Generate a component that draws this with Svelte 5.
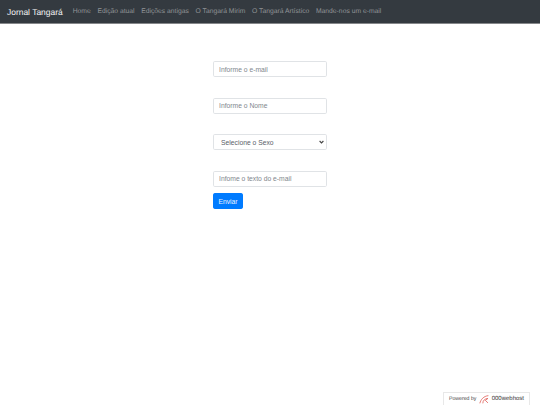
<script>
	const links = ['Home', 'Edição atual', 'Edições antigas', 'O Tangará Mirim', 'O Tangará Artístico', 'Mande-nos um e-mail'];
</script>

<nav class="navbar">
	<a class="brand" href="#top">Jornal Tangará</a>
	<ul class="links">
		{#each links as link}
			<li><a href="#top">{link}</a></li>
		{/each}
	</ul>
</nav>

<main>
	<form class="mail-form" onsubmit={e => e.preventDefault()}>
		<input type="email" placeholder="Informe o e-mail" />
		<input type="text" placeholder="Informe o Nome" />
		<select>
			<option>Selecione o Sexo</option>
		</select>
		<input class="last" type="text" placeholder="Infome o texto do e-mail" />
		<button type="submit">Enviar</button>
	</form>
</main>

<a class="badge" href="#top">
	<span>Powered by</span>
	<svg width="12" height="11" viewBox="0 0 12 11" aria-hidden="true">
		<path d="M1 10 C2 5.5 5.5 1.5 11 1" fill="none" stroke="#e0655f" stroke-width="1" />
		<path d="M4.5 10 C4.5 6.5 7 4.5 10.5 4.2 L7.5 6.6 L10.5 9.5" fill="none" stroke="#e0655f" stroke-width="1" />
	</svg>
	<b>000webhost</b>
</a>

<style>
	:global(body) {
		margin: 0;
		background: #fff;
		font-family: "Liberation Sans", Arial, sans-serif;
		text-rendering: geometricPrecision;
	}

	.navbar {
		display: flex;
		align-items: center;
		box-sizing: border-box;
		height: 24px;
		padding: 0 7px;
		background: #343a40;
		border-bottom: 1px solid #85878a;
	}

	.brand {
		margin-right: 10px;
		font-size: 8.45px;
		color: #f2f2f3;
		text-decoration: none;
		white-space: nowrap;
	}

	.links {
		display: flex;
		gap: 6.7px;
		margin: 0;
		padding: 0;
		font-size: 6.75px;
		list-style: none;
	}

	.links a {
		color: #919497;
		text-decoration: none;
		white-space: nowrap;
	}

	main {
		display: flex;
		justify-content: center;
		padding-top: 37px;
	}

	.mail-form {
		display: flex;
		flex-direction: column;
		align-items: flex-start;
		width: 114px;
	}

	input,
	select {
		box-sizing: border-box;
		width: 100%;
		height: 16px;
		margin: 0 0 20.5px;
		padding: 0 5px;
		border: 1px solid #e0e3e6;
		border-radius: 1.7px;
		background: #fff;
		font-family: inherit;
		font-size: 6.75px;
		color: #5a6168;
		outline: none;
	}

	select {
		appearance: none;
		padding-left: 7px;
		background: #fff url("data:image/svg+xml,%3Csvg xmlns='http://www.w3.org/2000/svg' width='5' height='4'%3E%3Cpath d='M.6 1 2.5 3 4.4 1' fill='none' stroke='%23444' stroke-width='1.1'/%3E%3C/svg%3E") no-repeat right 2px center;
	}

	input::placeholder {
		color: #81878d;
		opacity: 1;
	}

	input.last {
		margin-bottom: 6.5px;
	}

	button {
		width: 30px;
		height: 16px;
		padding: 0;
		border: 1px solid #007bff;
		border-radius: 1.7px;
		background: #007bff;
		font-family: inherit;
		font-size: 6.75px;
		color: #e8f2ff;
	}

	.badge {
		position: fixed;
		right: 10px;
		bottom: 0;
		display: flex;
		align-items: center;
		box-sizing: border-box;
		width: 87px;
		height: 13px;
		padding: 0 5px;
		gap: 2.5px;
		background: #fff;
		border: 1px solid #e8e8e8;
		border-bottom: none;
		font-size: 5.2px;
		color: #444;
		text-decoration: none;
		white-space: nowrap;
	}

	.badge b {
		font-weight: 400;
		font-size: 6px;
		color: #333;
	}
</style>
